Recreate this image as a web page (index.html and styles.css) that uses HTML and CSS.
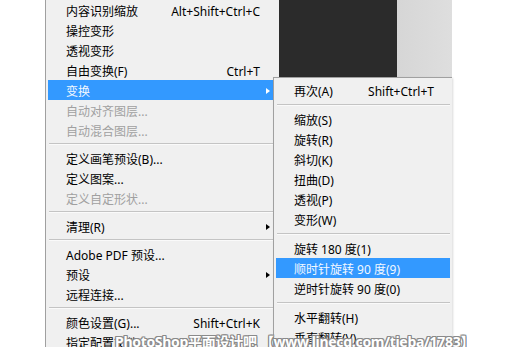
FILE: index.html
```html
<!DOCTYPE html>
<html lang="zh-CN">
<head>
    <meta charset="UTF-8">
    <meta name="viewport" content="width=device-width, initial-scale=1.0">
    <title>编辑 - 变换</title>
    <link rel="stylesheet" href="styles.css">
</head>
<body>
    <div class="stage">
        <div class="menu main-menu">
            <div class="item"><span class="label">内容识别缩放</span><span class="key">Alt+Shift+Ctrl+C</span><span class="more"></span></div>
            <div class="item"><span class="label">操控变形</span><span class="key"></span><span class="more"></span></div>
            <div class="item"><span class="label">透视变形</span><span class="key"></span><span class="more"></span></div>
            <div class="item"><span class="label">自由变换(F)</span><span class="key">Ctrl+T</span><span class="more"></span></div>
            <div class="item active"><span class="label">变换</span><span class="key"></span><span class="more"><i class="arrow"></i></span></div>
            <div class="item disabled"><span class="label">自动对齐图层...</span><span class="key"></span><span class="more"></span></div>
            <div class="item disabled"><span class="label">自动混合图层...</span><span class="key"></span><span class="more"></span></div>
            <div class="sep"></div>
            <div class="item"><span class="label">定义画笔预设(B)...</span><span class="key"></span><span class="more"></span></div>
            <div class="item"><span class="label">定义图案...</span><span class="key"></span><span class="more"></span></div>
            <div class="item disabled"><span class="label">定义自定形状...</span><span class="key"></span><span class="more"></span></div>
            <div class="sep"></div>
            <div class="item"><span class="label">清理(R)</span><span class="key"></span><span class="more"><i class="arrow"></i></span></div>
            <div class="sep"></div>
            <div class="item"><span class="label">Adobe PDF 预设...</span><span class="key"></span><span class="more"></span></div>
            <div class="item"><span class="label">预设</span><span class="key"></span><span class="more"><i class="arrow"></i></span></div>
            <div class="item"><span class="label">远程连接...</span><span class="key"></span><span class="more"></span></div>
            <div class="sep"></div>
            <div class="item"><span class="label">颜色设置(G)...</span><span class="key">Shift+Ctrl+K</span><span class="more"></span></div>
            <div class="item"><span class="label">指定配置文件...</span><span class="key"></span><span class="more"></span></div>
        </div>

        <div class="canvas">
            <div class="doc"></div>
            <div class="pasteboard"></div>
        </div>

        <div class="menu sub-menu">
            <div class="item"><span class="label">再次(A)</span><span class="key">Shift+Ctrl+T</span></div>
            <div class="sep"></div>
            <div class="item"><span class="label">缩放(S)</span></div>
            <div class="item"><span class="label">旋转(R)</span></div>
            <div class="item"><span class="label">斜切(K)</span></div>
            <div class="item"><span class="label">扭曲(D)</span></div>
            <div class="item"><span class="label">透视(P)</span></div>
            <div class="item"><span class="label">变形(W)</span></div>
            <div class="sep"></div>
            <div class="item"><span class="label">旋转 180 度(1)</span></div>
            <div class="item active"><span class="label">顺时针旋转 90 度(9)</span></div>
            <div class="item"><span class="label">逆时针旋转 90 度(0)</span></div>
            <div class="sep"></div>
            <div class="item"><span class="label">水平翻转(H)</span></div>
            <div class="item"><span class="label">垂直翻转(V)</span></div>
        </div>

        <div class="watermark">PhotoShop平面设计吧 【www.linecg.com/tieba/1783】</div>
    </div>
</body>
</html>
```

FILE: styles.css
```css
body {
    margin: 0;
    background: #fff;
    font-family: "Noto Sans", "Noto Sans CJK SC", sans-serif;
    font-size: 12px;
    color: #000;
}

.stage {
    position: relative;
    display: flex;
    align-items: flex-start;
    width: 522px;
    height: 347px;
    padding-left: 45px;
    box-sizing: border-box;
    overflow: hidden;
}

.menu {
    background: #f0f0f0;
    box-sizing: border-box;
}

.main-menu {
    width: 234px;
    height: 360px;
    border-left: 1px solid #a0a0a0;
    padding-left: 2px;
}

.item {
    display: flex;
    align-items: center;
    height: 20px;
    padding-top: 2px;
    box-sizing: border-box;
    white-space: nowrap;
}

.main-menu .item {
    padding-left: 18px;
    padding-right: 6px;
}

.item .label {
    flex: 1;
}

.main-menu .more {
    width: 13px;
    height: 14px;
    display: flex;
    align-items: center;
}

.arrow {
    display: block;
    margin-left: 6px;
    width: 0;
    height: 0;
    border-top: 3.5px solid transparent;
    border-bottom: 3.5px solid transparent;
    border-left: 4px solid #000;
}

.item.active {
    background: #3399ff;
    color: #f2f8ff;
}

.item.active .arrow {
    border-left-color: #fff;
}

.item.disabled {
    color: #a0a0a0;
}

.sep {
    height: 8px;
    display: flex;
    align-items: center;
    margin-left: 1px;
}

.sep::before {
    content: "";
    display: block;
    flex: 1;
    height: 1px;
    background: #c4c4c4;
    border-bottom: 1px solid #fafafa;
}

.canvas {
    display: flex;
    height: 77px;
}

.doc {
    width: 118px;
    background: #2b2b2b;
}

.pasteboard {
    width: 55px;
    background: linear-gradient(90deg, #d6d6d6, #dedede);
}

/* submenu overlays the main menu */
.sub-menu {
    position: absolute;
    left: 273px;
    top: 77px;
    width: 179px;
    height: 290px;
    border-left: 1px solid #a0a0a0;
    border-top: 1px solid #a0a0a0;
    padding: 2px 2px 0;
    box-shadow: 1px 1px 2px rgba(0, 0, 0, 0.15);
}

.sub-menu .item {
    padding-left: 18px;
    padding-right: 16px;
}

.sub-menu .sep {
    height: 9px;
}

.watermark {
    position: absolute;
    left: 115px;
    top: 331px;
    font-family: "Noto Sans", "Noto Sans CJK SC", sans-serif;
    font-weight: bold;
    font-size: 14px;
    letter-spacing: -0.3px;
    color: #fff;
    white-space: nowrap;
    text-shadow: 1px 0 0 #8a8a8a, -1px 0 0 #8a8a8a, 0 1px 0 #8a8a8a, 0 -1px 0 #8a8a8a,
        1px 1px 0 #8a8a8a, -1px -1px 0 #8a8a8a, 1px -1px 0 #8a8a8a, -1px 1px 0 #8a8a8a;
}
```
